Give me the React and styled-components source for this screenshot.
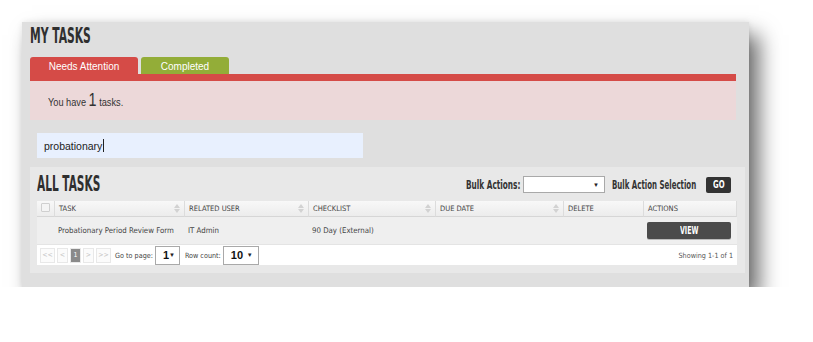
import React from "react";
import styled, { createGlobalStyle } from "styled-components";

const GlobalStyle = createGlobalStyle`
  body {
    margin: 0;
    background: #fff;
    font-family: "Liberation Sans", Arial, sans-serif;
  }
`;

const Page = styled.div`
  padding: 22px 0 0 22px;
`;

const Panel = styled.div`
  width: 727px;
  height: 265px;
  box-sizing: border-box;
  background: #dfdfdf;
  box-shadow: 10px 13px 20px rgba(0, 0, 0, 0.58), 0 0 6px rgba(0, 0, 0, 0.08);
  padding: 4px 0 0 8px;
  display: flex;
  flex-direction: column;
`;

/* narrow display text: no condensed face is installed, so squeeze it */
const Squeeze = styled.span`
  display: inline-block;
  width: ${(p) => p.w}px;
  white-space: nowrap;
  transform: scaleX(${(p) => p.k});
  transform-origin: left center;
`;

const Heading = styled.h1`
  margin: 0;
  font-family: "DejaVu Sans Condensed", sans-serif;
  font-weight: 700;
  font-size: 21px;
  line-height: 21px;
  color: #2f2f2f;
`;

const TabRow = styled.div`
  display: flex;
  gap: 3px;
  margin-top: 10px;
  height: 17px;
  width: 706px;
`;

const Tab = styled.div`
  width: ${(p) => p.w}px;
  height: 17px;
  border-radius: 3px 3px 0 0;
  background: ${(p) => p.color};
  color: #fff;
  font-size: 10px;
  line-height: 19px;
  text-align: center;
`;

const TabBar = styled.div`
  width: 706px;
  height: 7px;
  background: #d54b47;
`;

const Notice = styled.div`
  width: 706px;
  height: 39px;
  box-sizing: border-box;
  background: #ecd8d9;
  padding-left: 18px;
  display: flex;
  align-items: center;
  font-size: 11.5px;
  color: #333;
`;

const Big = styled.span`
  font-size: 18px;
`;

const SearchBox = styled.div`
  margin: 13px 0 0 7px;
  width: 326px;
  height: 25px;
  box-sizing: border-box;
  background: #e8f0fe;
  padding-left: 7px;
  display: flex;
  align-items: center;
  font-size: 10.5px;
  color: #222;
`;

const Caret = styled.span`
  display: inline-block;
  width: 1px;
  height: 13px;
  background: #222;
  margin-left: 1px;
`;

const TasksBox = styled.div`
  margin-top: 9px;
  width: 715px;
  box-sizing: border-box;
  background: #e8e8e8;
  padding: 0 8px 8px 7px;
`;

const TasksHead = styled.div`
  height: 34px;
  display: flex;
  align-items: center;
  justify-content: space-between;
`;

const Bulk = styled.div`
  display: flex;
  align-items: center;
  margin-right: 6px;
  margin-top: 1px;
`;

const BulkLabel = styled.span`
  font-family: "DejaVu Sans Condensed", sans-serif;
  font-weight: 700;
  font-size: 12px;
  color: #333;
  margin: ${(p) => p.m || "0"};
`;

const SelectBox = styled.div`
  width: ${(p) => p.w}px;
  height: ${(p) => p.h || 17}px;
  box-sizing: border-box;
  background: #fff;
  border: 1px solid #a9a9a9;
  display: flex;
  align-items: center;
  justify-content: space-between;
  padding: 0 5px 0 7px;
  font-family: "Liberation Sans", Arial, sans-serif;
  font-size: 11px;
  font-weight: 700;
  color: #111;
`;

const Arrow = styled.span`
  font-size: 6px;
  color: #222;
`;

const GoButton = styled.div`
  width: 25px;
  height: 16px;
  margin-left: 9px;
  border-radius: 2px;
  background: #333;
  color: #fff;
  font-family: "DejaVu Sans Condensed", sans-serif;
  font-weight: 700;
  font-size: 11px;
  display: flex;
  align-items: center;
  justify-content: center;
`;

const Table = styled.div`
  width: 700px;
  display: grid;
  grid-template-columns: 18px 130px 124px 127px 128px 80px 93px;
  font-family: "DejaVu Sans Condensed", "DejaVu Sans", sans-serif;
  color: #444;
`;

const HeadCell = styled.div`
  height: 16px;
  box-sizing: border-box;
  background: linear-gradient(#f8f8f8, #ececec);
  border-right: 1px solid #dcdcdc;
  border-bottom: 1px solid #d6d6d6;
  display: flex;
  align-items: center;
  justify-content: space-between;
  padding: 0 4px;
  text-transform: uppercase;
  font-size: 7.5px;
  &:last-child {
    border-right: none;
  }
`;

const CheckBox = styled.span`
  width: 7px;
  height: 7px;
  margin-top: -3px;
  border: 1px solid #cfcfcf;
  border-radius: 1px;
  background: #f4f4f4;
`;

const SortIcon = styled.span`
  display: flex;
  flex-direction: column;
  gap: 1px;
  &::before,
  &::after {
    content: "";
    border-left: 3px solid transparent;
    border-right: 3px solid transparent;
  }
  &::before {
    border-bottom: 4px solid #d2d2d2;
  }
  &::after {
    border-top: 4px solid #d2d2d2;
  }
`;

const Cell = styled.div`
  height: 28px;
  background: #efefef;
  border-bottom: 1px solid #e4e4e4;
  box-sizing: border-box;
  display: flex;
  align-items: center;
  padding: 0 3px;
  font-size: 7.8px;
  color: #444;
  white-space: nowrap;
`;

const ViewButton = styled.div`
  width: 84px;
  height: 17px;
  border-radius: 2px;
  background: #4b4b4b;
  box-shadow: 0 1px 0 #bbb;
  color: #fff;
  font-family: "DejaVu Sans Condensed", sans-serif;
  font-weight: 700;
  font-size: 10px;
  display: flex;
  align-items: center;
  justify-content: center;
`;

const Footer = styled.div`
  grid-column: 1 / -1;
  height: 20px;
  background: #fff;
  display: flex;
  align-items: center;
  padding: 0 4px 0 3px;
  font-size: 7.2px;
  color: #444;
`;

const Pager = styled.div`
  display: flex;
  gap: 2px;
  margin-right: 4px;
`;

const PageBtn = styled.span`
  width: ${(p) => p.w || 11}px;
  height: 15px;
  box-sizing: border-box;
  border: 1px solid #e8e8e8;
  background: ${(p) => (p.active ? "#8a8a8a" : "#fbfbfb")};
  color: ${(p) => (p.active ? "#fff" : "#c4c4c4")};
  font-size: 7px;
  line-height: 13px;
  text-align: center;
`;

const FooterLabel = styled.span`
  margin: 0 2px 0 ${(p) => p.ml || 0}px;
`;

const Showing = styled.span`
  margin-left: auto;
  color: #555;
`;

const headers = [
  { label: "Task", sort: true },
  { label: "Related User", sort: true },
  { label: "Checklist", sort: true },
  { label: "Due Date", sort: true },
  { label: "Delete" },
  { label: "Actions" },
];

export default function App() {
  return (
    <Page>
      <GlobalStyle />
      <Panel>
        <Heading>
          <Squeeze w={60} k={0.57}>MY TASKS</Squeeze>
        </Heading>
        <TabRow>
          <Tab w={108} color="#d54b47">Needs Attention</Tab>
          <Tab w={88} color="#93ad38">Completed</Tab>
        </TabRow>
        <TabBar />
        <Notice>
          <Squeeze w={74} k={0.8}>
            You have <Big>1</Big> tasks.
          </Squeeze>
        </Notice>
        <SearchBox>
          probationary
          <Caret />
        </SearchBox>
        <TasksBox>
          <TasksHead>
            <Heading>
              <Squeeze w={63} k={0.56}>ALL TASKS</Squeeze>
            </Heading>
            <Bulk>
              <BulkLabel m="0 3px 0 0">
                <Squeeze w={54} k={0.68}>Bulk Actions:</Squeeze>
              </BulkLabel>
              <SelectBox w={82}>
                <span />
                <Arrow>▼</Arrow>
              </SelectBox>
              <BulkLabel m="0 0 0 7px">
                <Squeeze w={85} k={0.65}>Bulk Action Selection</Squeeze>
              </BulkLabel>
              <GoButton>
                <Squeeze w={12} k={0.7}>GO</Squeeze>
              </GoButton>
            </Bulk>
          </TasksHead>
          <Table>
            <HeadCell>
              <CheckBox />
            </HeadCell>
            {headers.map((h) => (
              <HeadCell key={h.label}>
                {h.label}
                {h.sort && <SortIcon />}
              </HeadCell>
            ))}
            <Cell />
            <Cell>Probationary Period Review Form</Cell>
            <Cell>IT Admin</Cell>
            <Cell>90 Day (External)</Cell>
            <Cell />
            <Cell />
            <Cell>
              <ViewButton>
                <Squeeze w={18} k={0.7}>VIEW</Squeeze>
              </ViewButton>
            </Cell>
            <Footer>
              <Pager>
                <PageBtn w={15}>&lt;&lt;</PageBtn>
                <PageBtn>&lt;</PageBtn>
                <PageBtn active>1</PageBtn>
                <PageBtn>&gt;</PageBtn>
                <PageBtn w={15}>&gt;&gt;</PageBtn>
              </Pager>
              <FooterLabel>Go to page:</FooterLabel>
              <SelectBox w={25} h={19}>
                1<Arrow>▼</Arrow>
              </SelectBox>
              <FooterLabel ml={5}>Row count:</FooterLabel>
              <SelectBox w={36} h={19}>
                10<Arrow>▼</Arrow>
              </SelectBox>
              <Showing>Showing 1-1 of 1</Showing>
            </Footer>
          </Table>
        </TasksBox>
      </Panel>
    </Page>
  );
}
